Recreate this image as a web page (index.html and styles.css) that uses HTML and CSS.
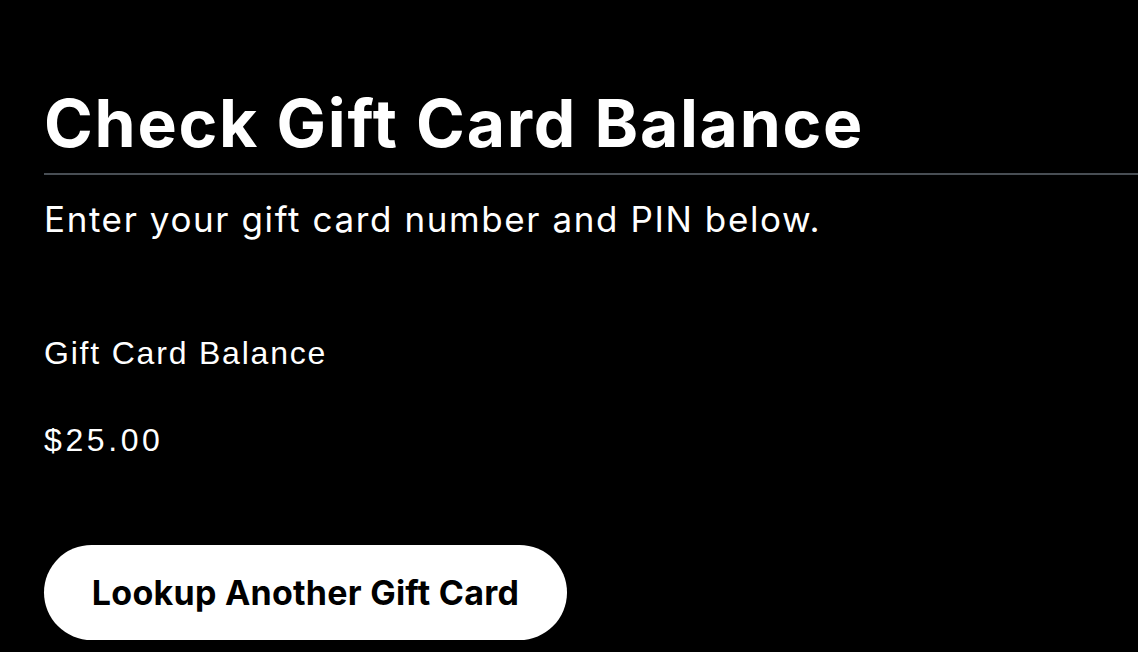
FILE: index.html
```html
<!DOCTYPE html>
<html lang="en">
<head>
<meta charset="utf-8">
<title>Check Gift Card Balance</title>
<link rel="stylesheet" href="styles.css">
</head>
<body>
<main class="page">
  <h1 class="title">Check Gift Card Balance</h1>
  <p class="subtitle">Enter your gift card number and PIN below.</p>
  <p class="label">Gift Card Balance</p>
  <p class="value">$25.00</p>
  <button class="lookup" type="button">Lookup Another Gift Card</button>
</main>
</body>
</html>
```

FILE: styles.css
```css
html, body {
  margin: 0;
  padding: 0;
  background: #000;
  color: #fff;
}
body {
  overflow: hidden;
}
.page {
  padding-left: 44px;
  display: flex;
  flex-direction: column;
  align-items: flex-start;
}
.title {
  align-self: stretch;
  margin: 0;
  padding-top: 90px;
  padding-bottom: 17px;
  font-family: Inter, Lato, sans-serif;
  font-weight: 700;
  font-size: 66px;
  letter-spacing: 1.75px;
  line-height: 1;
  border-bottom: 2px solid #484e54;
}
.subtitle {
  margin: 27px 0 0;
  font-family: Inter, Lato, sans-serif;
  font-size: 35px;
  letter-spacing: 1.6px;
  line-height: 1;
}
.label {
  margin: 100px 0 0;
  font-family: "Liberation Sans", Arial, sans-serif;
  font-size: 32px;
  letter-spacing: 1.8px;
  line-height: 1;
}
.value {
  margin: 55px 0 0;
  font-family: "Liberation Sans", Arial, sans-serif;
  font-size: 32px;
  letter-spacing: 3.6px;
  line-height: 1;
}
.lookup {
  margin-top: 89px;
  width: 523px;
  height: 95px;
  border: 0;
  border-radius: 48px;
  background: #fff;
  color: #000;
  font-family: Inter, Lato, sans-serif;
  font-weight: 700;
  font-size: 34px;
  letter-spacing: 0.25px;
  padding: 0;
}
```
